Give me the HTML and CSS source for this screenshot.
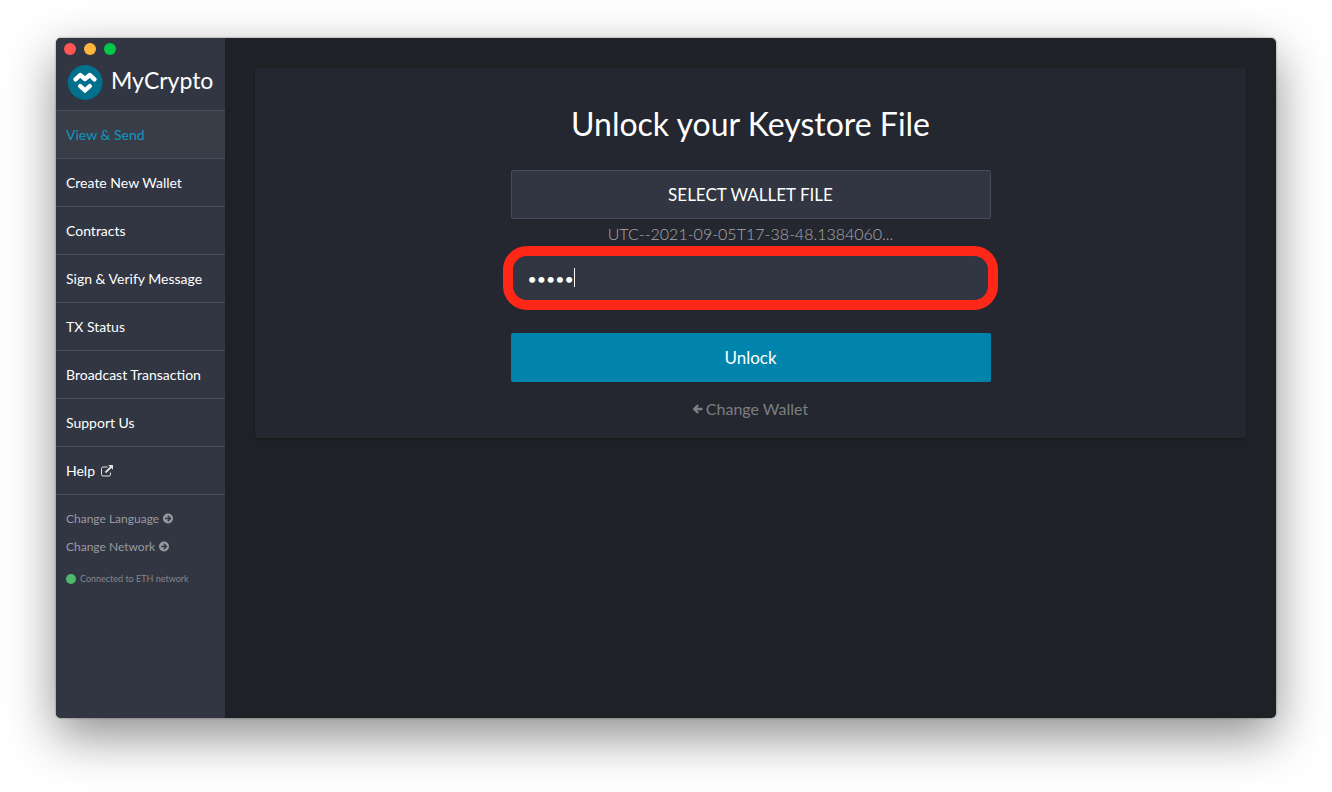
FILE: index.html
```html
<!DOCTYPE html>
<html lang="en">
<head>
<meta charset="utf-8">
<title>MyCrypto</title>
<link rel="stylesheet" href="styles.css">
</head>
<body>
<div class="window">
  <aside class="sidebar">
    <div class="lights"><span class="light light-close"></span><span class="light light-min"></span><span class="light light-max"></span></div>
    <div class="brand">
      <svg class="brand-mark" viewBox="0 0 36 36" aria-hidden="true">
        <circle cx="18.200" cy="18.500" r="17.400" fill="#00708c"/>
        <path d="M8.500 15.300L13.200 11L18 15L22.800 11L27.500 15.300" fill="none" stroke="#fff" stroke-width="4.400" stroke-linecap="round" stroke-linejoin="round"/>
        <path d="M13.200 22.200L18 26.400L22.800 22.200" fill="none" stroke="#fff" stroke-width="4.400" stroke-linecap="round" stroke-linejoin="miter"/>
      </svg>
      <span class="brand-name">MyCrypto</span>
    </div>
    <nav class="nav">
      <a class="nav-link nav-link-active" href="#">View &amp; Send</a>
      <a class="nav-link" href="#">Create New Wallet</a>
      <a class="nav-link" href="#">Contracts</a>
      <a class="nav-link" href="#">Sign &amp; Verify Message</a>
      <a class="nav-link" href="#">TX Status</a>
      <a class="nav-link" href="#">Broadcast Transaction</a>
      <a class="nav-link" href="#">Support Us</a>
      <a class="nav-link" href="#">Help
        <svg class="icon-external" viewBox="0 0 14 14" aria-hidden="true"><path d="M7.500 3H3a1.500 1.500 0 0 0-1.500 1.500v6A1.500 1.500 0 0 0 3 12h6a1.500 1.500 0 0 0 1.500-1.500V8.500" fill="none" stroke="currentColor" stroke-width="1"/><path d="M5.500 8.500L11 3" stroke="currentColor" stroke-width="1.800"/><path d="M8.200 1H13V5.800Z" fill="currentColor"/></svg>
      </a>
    </nav>
    <div class="options">
      <button class="option" type="button">Change Language
        <svg class="icon-circle" viewBox="0 0 12 12" aria-hidden="true"><circle cx="6" cy="6.500" r="5" fill="currentColor"/><path d="M3 6.500H8.200M5.700 3.700L8.500 6.500L5.700 9.300" fill="none" stroke="#313642" stroke-width="1.400"/></svg>
      </button>
      <button class="option" type="button">Change Network
        <svg class="icon-circle" viewBox="0 0 12 12" aria-hidden="true"><circle cx="6" cy="6.500" r="5" fill="currentColor"/><path d="M3 6.500H8.200M5.700 3.700L8.500 6.500L5.700 9.300" fill="none" stroke="#313642" stroke-width="1.400"/></svg>
      </button>
    </div>
    <div class="status"><span class="status-dot"></span>Connected to ETH network</div>
  </aside>
  <main class="main">
    <section class="panel">
      <h1 class="title">Unlock your Keystore File</h1>
      <form class="form">
        <button class="btn btn-select" type="button">SELECT WALLET FILE</button>
        <p class="filename">UTC--2021-09-05T17-38-48.1384060...</p>
        <div class="field">
          <input class="password" type="password" value="12345" aria-label="Password">
          <span class="caret"></span>
          <span class="highlight"></span>
        </div>
        <button class="btn btn-unlock" type="button">Unlock</button>
      </form>
      <button class="back" type="button">
        <svg class="icon-back" viewBox="0 0 10 10" aria-hidden="true"><path d="M9.500 5H2M5.200 1L1.300 5L5.200 9" fill="none" stroke="currentColor" stroke-width="2.400"/></svg>
        Change Wallet
      </button>
    </section>
  </main>
</div>
</body>
</html>
```
FILE: styles.css
```css
* { box-sizing: border-box; }

body {
  margin: 0;
  min-height: 100vh;
  display: flex;
  padding: 38px 56px 74px;
  background: #fff;
  color: #fff;
  font-family: Lato, "Open Sans", sans-serif;
}

button {
  border: 0;
  background: none;
  font-family: inherit;
  cursor: pointer;
}

.window {
  flex: 1;
  display: flex;
  overflow: hidden;
  border-radius: 5px;
  background: #1e2125;
  box-shadow: 0 0 2px rgba(0, 0, 0, 0.5), 0 18px 50px rgba(0, 0, 0, 0.45);
}

.sidebar {
  flex: 0 0 169px;
  display: flex;
  flex-direction: column;
  background: #313642;
}

.lights {
  display: flex;
  gap: 8px;
  padding: 5px 8px 0;
}

.light {
  width: 12px;
  height: 12px;
  border-radius: 50%;
}

.light-close { background: #ff5652; }
.light-min { background: #ffb53c; }
.light-max { background: #00c748; }

.brand {
  display: flex;
  align-items: flex-start;
  gap: 8px;
  height: 55px;
  padding: 9px 0 0 11px;
}

.brand-mark {
  width: 36px;
  height: 36px;
}

.brand-name {
  font-size: 23px;
  line-height: 32px;
}

.nav {
  display: flex;
  flex-direction: column;
  border-top: 1px solid #474c57;
}

.nav-link {
  display: flex;
  align-items: center;
  gap: 5px;
  height: 48px;
  padding-left: 10px;
  border-bottom: 1px solid #474c57;
  color: #fff;
  font-size: 14px;
  text-decoration: none;
}

.nav-link-active {
  background: #393d48;
  color: #0e97c0;
}

.icon-external {
  width: 14px;
  height: 14px;
  color: #e2e2de;
}

.options {
  display: flex;
  flex-direction: column;
  padding-top: 9px;
}

.option {
  display: flex;
  align-items: center;
  gap: 3px;
  height: 28px;
  padding: 0 10px;
  color: #989ba1;
  font-size: 12px;
}

.icon-circle {
  width: 12px;
  height: 12px;
}

.status {
  display: flex;
  align-items: center;
  gap: 4px;
  padding: 13px 10px;
  color: #83868e;
  font-size: 9px;
  line-height: 12px;
}

.status-dot {
  width: 10px;
  height: 10px;
  border-radius: 50%;
  background: #4fb96b;
}

.main {
  flex: 1;
  padding: 30px;
}

.panel {
  display: flex;
  flex-direction: column;
  align-items: center;
  padding: 36px 30px 17px;
  border-radius: 2px;
  background: #24272f;
  box-shadow: 0 1px 2px rgba(0, 0, 0, 0.25);
}

.title {
  margin: 0 0 26px;
  font-size: 32px;
  font-weight: 400;
  line-height: 40px;
}

.form {
  display: flex;
  flex-direction: column;
  width: 100%;
  max-width: 480px;
}

.btn {
  height: 49px;
  border-radius: 2px;
  color: #fff;
  font-size: 17px;
}

.btn-select {
  border: 1px solid #474c5a;
  background: #313642;
}

.btn-unlock {
  background: #0084ab;
}

.filename {
  margin: 4px 0 10px;
  color: #a8aaad;
  font-size: 16px;
  font-weight: 300;
  line-height: 21px;
  text-align: center;
}

.field {
  position: relative;
  margin-bottom: 31px;
}

.password {
  display: block;
  width: 100%;
  height: 48px;
  padding: 0 17px;
  border: 0;
  border-radius: 2px;
  outline: 0;
  background: #313642;
  color: #fff;
  font-family: inherit;
  font-size: 16px;
}

.caret {
  position: absolute;
  top: 14px;
  left: 63px;
  width: 1px;
  height: 19px;
  background: #fff;
}

.highlight {
  position: absolute;
  inset: -8px -7px -8px -8px;
  border: 10px solid #ff2718;
  border-radius: 24px;
  pointer-events: none;
}

.back {
  display: flex;
  align-items: center;
  gap: 3px;
  margin-top: 15px;
  padding: 0;
  color: #7c7e82;
  font-size: 16px;
  line-height: 24px;
}

.icon-back {
  width: 10px;
  height: 10px;
}
```
